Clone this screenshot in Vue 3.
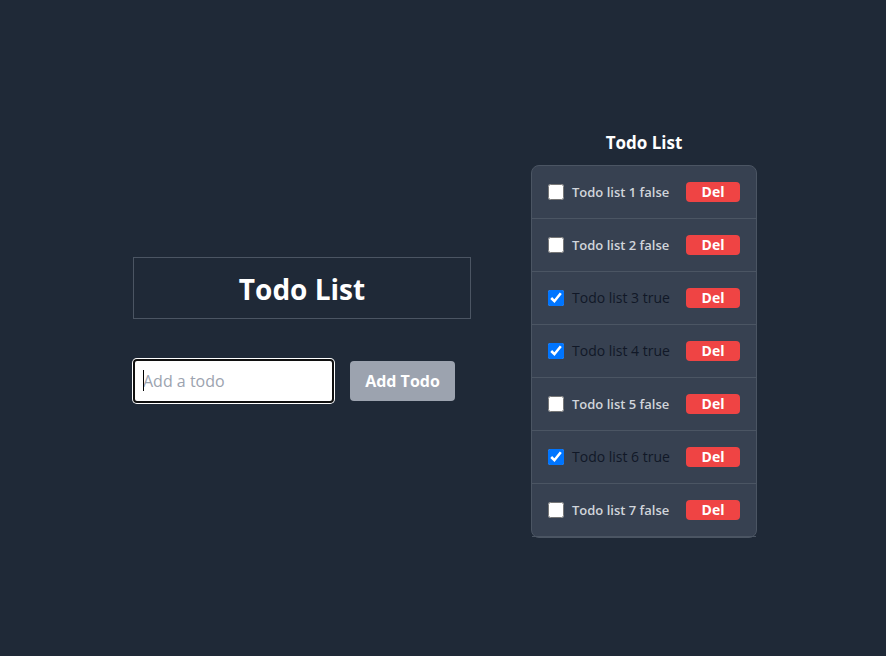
<script setup>
import { ref } from 'vue'

const draft = ref('')
const nextId = ref(8)
const todos = ref(
  [false, false, true, true, false, true, false].map((done, i) => ({
    id: i + 1,
    title: `Todo list ${i + 1}`,
    done,
  }))
)

function addTodo() {
  const title = draft.value.trim()
  if (!title) return
  todos.value.push({ id: nextId.value++, title, done: false })
  draft.value = ''
}

function removeTodo(id) {
  todos.value = todos.value.filter((todo) => todo.id !== id)
}
</script>

<template>
  <main class="page">
    <section class="entry">
      <h1 class="title">Todo List</h1>
      <form class="form" @submit.prevent="addTodo">
        <div class="field">
          <input v-model="draft" class="input" type="text" placeholder="Add a todo" aria-label="Add a todo" />
          <span v-if="!draft" class="caret" aria-hidden="true"></span>
        </div>
        <button class="add" type="submit">Add Todo</button>
      </form>
    </section>
    <section class="todos">
      <h2 class="heading">Todo List</h2>
      <ul class="list">
        <li v-for="todo in todos" :key="todo.id" class="item">
          <input :id="`todo-${todo.id}`" v-model="todo.done" class="check" type="checkbox" />
          <label :for="`todo-${todo.id}`" class="label" :class="{ done: todo.done }">{{ todo.title }} {{ todo.done }}</label>
          <button class="del" type="button" @click="removeTodo(todo.id)">Del</button>
        </li>
      </ul>
    </section>
  </main>
</template>

<style>
body {
  margin: 0;
  background: #1f2937;
}
</style>

<style scoped>
* {
  box-sizing: border-box;
}

.page {
  display: flex;
  align-items: center;
  justify-content: center;
  gap: 60px;
  min-height: 100vh;
  padding-left: 4px;
  font-family: "Segoe UI", "Open Sans", "Noto Sans", sans-serif;
  font-size: 16px;
  line-height: 24px;
  color: #fff;
}

.entry {
  padding-top: 2px;
}

.title {
  margin: 0 0 42px;
  padding: 13px 12px 11px;
  border: 1px solid #4b5563;
  font-size: 28px;
  line-height: 36px;
  font-weight: 700;
  text-align: center;
}

.form {
  display: flex;
  justify-content: space-between;
  gap: 18px;
  padding: 0 16px 0 2px;
}

.field {
  position: relative;
}

.input {
  display: block;
  width: 197px;
  height: 40px;
  padding: 8px;
  border: 0;
  border-radius: 2px;
  outline: none;
  background: #fff;
  box-shadow: 0 0 0 2px #101010, 0 0 0 3px #fff;
  color: #111827;
  font: inherit;
}

.input::placeholder {
  color: #9ca3af;
  opacity: 1;
}

.caret {
  position: absolute;
  top: 9px;
  left: 8px;
  width: 1px;
  height: 21px;
  background: #000;
}

.input:focus + .caret {
  display: none;
}

.add {
  width: 105px;
  height: 40px;
  padding: 0;
  border: 0;
  border-radius: 4px;
  background: #9ca3af;
  color: #fff;
  font: inherit;
  font-weight: 700;
}

.todos {
  width: 226px;
  padding-top: 10px;
}

.heading {
  margin: 0 0 8px;
  font-size: 17px;
  line-height: 28px;
  font-weight: 700;
  text-align: center;
}

.list {
  margin: 0;
  padding: 0;
  border: 1px solid #4b5563;
  border-radius: 8px;
  background: #374151;
  list-style: none;
}

.item {
  display: flex;
  align-items: center;
  padding: 16px;
  border-bottom: 1px solid #4b5563;
  font-size: 14px;
  line-height: 20px;
}

.check {
  width: 16px;
  height: 16px;
  margin: 0 8px 0 0;
  accent-color: #0075ff;
}

.label {
  flex: 1;
  white-space: nowrap;
  font-size: 13px;
  font-weight: 600;
  color: #d1d5db;
}

.label.done {
  font-size: 14px;
  font-weight: 400;
  color: #111827;
}

.del {
  width: 54px;
  height: 20px;
  padding: 0;
  border: 0;
  border-radius: 4px;
  background: #ef4444;
  color: #fff;
  font: inherit;
  font-weight: 700;
}
</style>
